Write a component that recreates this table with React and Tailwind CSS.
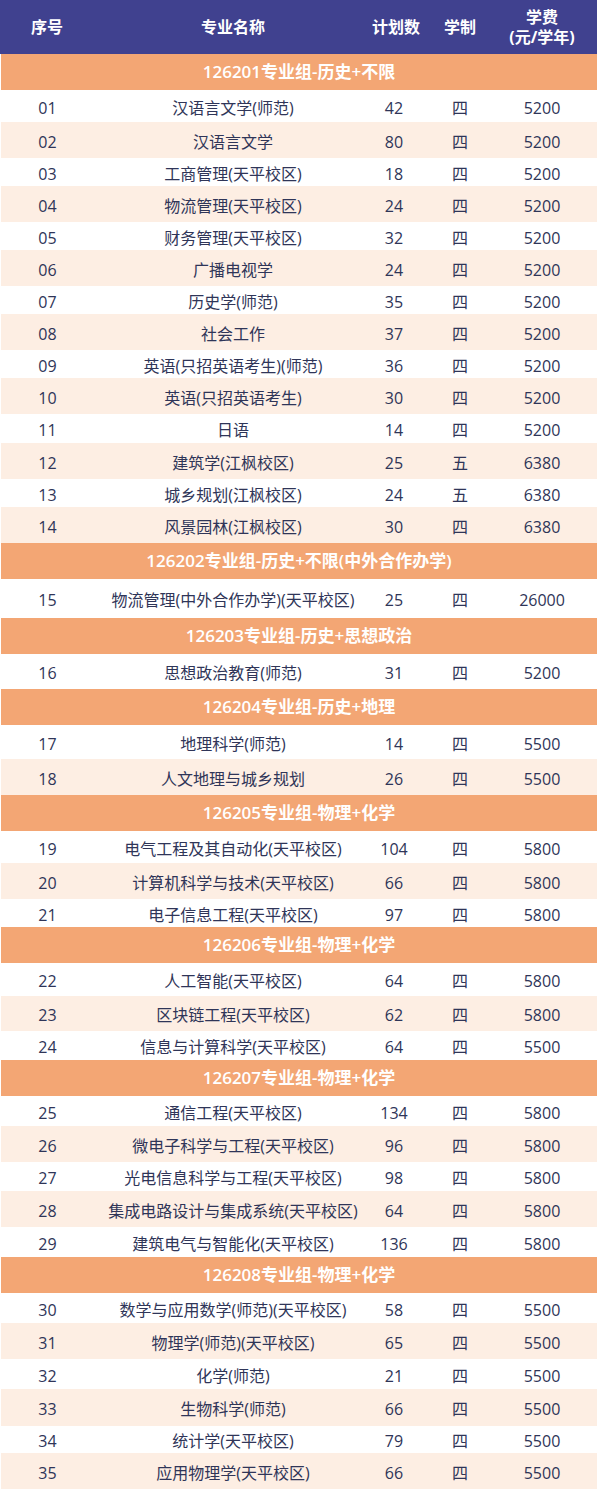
import React from "react";

const groups = [
  {
    title: "126201专业组-历史+不限",
    rows: [
      ["01", "汉语言文学(师范)", "42", "四", "5200", 32],
      ["02", "汉语言文学", "80", "四", "5200", 36],
      ["03", "工商管理(天平校区)", "18", "四", "5200", 28],
      ["04", "物流管理(天平校区)", "24", "四", "5200", 36],
      ["05", "财务管理(天平校区)", "32", "四", "5200", 28],
      ["06", "广播电视学", "24", "四", "5200", 36],
      ["07", "历史学(师范)", "35", "四", "5200", 28],
      ["08", "社会工作", "37", "四", "5200", 36],
      ["09", "英语(只招英语考生)(师范)", "36", "四", "5200", 28],
      ["10", "英语(只招英语考生)", "30", "四", "5200", 36],
      ["11", "日语", "14", "四", "5200", 29],
      ["12", "建筑学(江枫校区)", "25", "五", "6380", 36],
      ["13", "城乡规划(江枫校区)", "24", "五", "6380", 28],
      ["14", "风景园林(江枫校区)", "30", "四", "6380", 36],
    ],
  },
  {
    title: "126202专业组-历史+不限(中外合作办学)",
    rows: [["15", "物流管理(中外合作办学)(天平校区)", "25", "四", "26000", 39]],
  },
  {
    title: "126203专业组-历史+思想政治",
    rows: [["16", "思想政治教育(师范)", "31", "四", "5200", 35]],
  },
  {
    title: "126204专业组-历史+地理",
    rows: [
      ["17", "地理科学(师范)", "14", "四", "5500", 34],
      ["18", "人文地理与城乡规划", "26", "四", "5500", 36],
    ],
  },
  {
    title: "126205专业组-物理+化学",
    rows: [
      ["19", "电气工程及其自动化(天平校区)", "104", "四", "5800", 32],
      ["20", "计算机科学与技术(天平校区)", "66", "四", "5800", 36],
      ["21", "电子信息工程(天平校区)", "97", "四", "5800", 28],
    ],
  },
  {
    title: "126206专业组-物理+化学",
    rows: [
      ["22", "人工智能(天平校区)", "64", "四", "5800", 33],
      ["23", "区块链工程(天平校区)", "62", "四", "5800", 35],
      ["24", "信息与计算科学(天平校区)", "64", "四", "5500", 29],
    ],
  },
  {
    title: "126207专业组-物理+化学",
    rows: [
      ["25", "通信工程(天平校区)", "134", "四", "5800", 30],
      ["26", "微电子科学与工程(天平校区)", "96", "四", "5800", 36],
      ["27", "光电信息科学与工程(天平校区)", "98", "四", "5800", 29],
      ["28", "集成电路设计与集成系统(天平校区)", "64", "四", "5800", 36],
      ["29", "建筑电气与智能化(天平校区)", "136", "四", "5800", 30],
    ],
  },
  {
    title: "126208专业组-物理+化学",
    rows: [
      ["30", "数学与应用数学(师范)(天平校区)", "58", "四", "5500", 30],
      ["31", "物理学(师范)(天平校区)", "65", "四", "5500", 36],
      ["32", "化学(师范)", "21", "四", "5500", 30],
      ["33", "生物科学(师范)", "66", "四", "5500", 37],
      ["34", "统计学(天平校区)", "79", "四", "5500", 27],
      ["35", "应用物理学(天平校区)", "66", "四", "5500", 36],
    ],
  },
];

const font = {
  fontFamily: '"Open Sans", "Noto Sans CJK SC", sans-serif',
};

const Row = ({ row, pale }) => {
  const [no, name, plan, years, fee, h] = row;
  return (
    <div
      className={`ml-px flex items-center pt-[3px] text-[16px] text-[#2f3558] ${
        pale ? "bg-[#fdeee3]" : "bg-white"
      }`}
      style={{ height: h }}
    >
      <div className="w-[93px] text-center">{no}</div>
      <div className="w-[278px] text-center whitespace-nowrap">{name}</div>
      <div className="w-[44px] text-center">{plan}</div>
      <div className="w-[88px] text-center">{years}</div>
      <div className="w-[76px] text-center">{fee}</div>
    </div>
  );
};

export default function App() {
  return (
    <div className="w-[597px] h-[1490px] overflow-hidden bg-white" style={font}>
      <div className="h-[54px] bg-[#40418f] flex items-center text-white font-bold text-[16px] leading-[20px]">
        <div className="w-[94px] text-center">序号</div>
        <div className="w-[278px] text-center">专业名称</div>
        <div className="w-[44px] text-center whitespace-nowrap">计划数</div>
        <div className="w-[88px] text-center">学制</div>
        <div className="w-[76px] text-center whitespace-nowrap">
          学费
          <br />
          (元/学年)
        </div>
      </div>
      {groups.map((g) => (
        <div key={g.title}>
          <div className="ml-px h-[36px] bg-[#f3a674] flex items-center justify-center text-white font-semibold text-[17px]">
            {g.title}
          </div>
          {g.rows.map((r, i) => (
            <Row key={r[0]} row={r} pale={i % 2 === 1} />
          ))}
        </div>
      ))}
    </div>
  );
}
